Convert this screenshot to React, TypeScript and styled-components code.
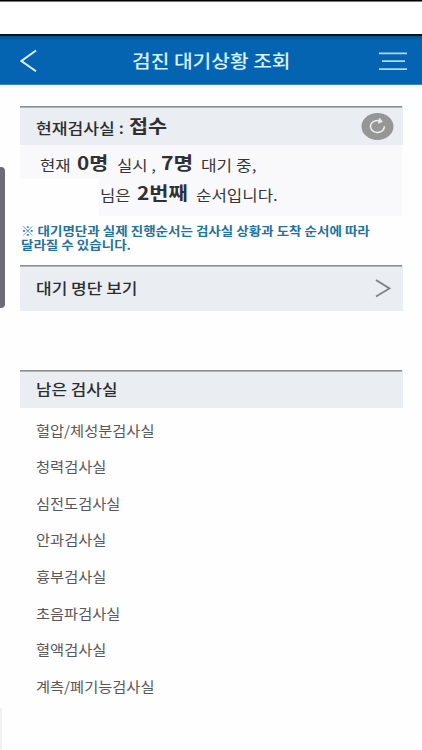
import React, { useLayoutEffect, useRef, useState } from "react";
import styled, { createGlobalStyle } from "styled-components";

const GlobalStyle = createGlobalStyle`
  * { box-sizing: border-box; }
  body { margin: 0; background: #fefefe; font-family: "Noto Sans CJK KR", "Noto Sans", sans-serif; }
  h1, h2, p, ul { margin: 0; padding: 0; font-weight: inherit; }
`;

const Screen = styled.div`
  position: relative;
  width: 422px;
  height: 750px;
  overflow: hidden;
  background: #fefefe;
`;

const StatusBar = styled.div`
  height: 36px;
  background: #fff;
  border-top: 1px solid #000;
  border-bottom: 2px solid #03121f;
  box-shadow: inset 0 1px 0 #777;
`;

const Header = styled.header`
  height: 49px;
  padding: 0 15px 0 20px;
  display: grid;
  grid-template-columns: 112px 1fr 28px;
  align-items: center;
  background: linear-gradient(#04528f 0, #0563ae 4px, #0464b2 10px, #0464b2 47px, #185f98 49px);
  border-bottom: 1px solid #3f86bd;
`;

const Content = styled.main`
  padding: 21px 19px 0 20px;
`;

const Bar = styled.div<{ $height: number; $top?: number }>`
  height: ${(p) => p.$height}px;
  margin-top: ${(p) => p.$top ?? 0}px;
  padding: 0 9px 0 16px;
  display: flex;
  align-items: center;
  background: linear-gradient(#8b8e90, #8b8e90) 0 0 / 382px 1.6px no-repeat, #eaedf1;
`;

const Push = styled.div<{ $right?: number }>`
  margin-left: auto;
  margin-right: ${(p) => p.$right ?? 0}px;
  display: flex;
`;

const Status = styled.div`
  height: 71px;
  width: 382px;
  background: #f9f9fc;
`;

const StatusRow = styled.p<{ $height: number; $left: number }>`
  height: ${(p) => p.$height}px;
  padding-left: ${(p) => p.$left}px;
  display: flex;
  align-items: center;
`;

const Redacted = styled.span`
  width: 79px;
  height: 37px;
  margin-right: 1px;
  background: #fefefe;
`;

const Notice = styled.div`
  height: 49px;
  padding: 8px 0 0 1px;
`;

const List = styled.ul`
  list-style: none;
  padding: 3.4px 0 0 16px;
`;

const Item = styled.li`
  height: 36.6px;
  display: flex;
  align-items: center;
`;

const SideHandle = styled.div`
  position: absolute;
  left: 0;
  top: 167px;
  width: 4.5px;
  height: 141px;
  border-radius: 0 4px 4px 0;
  background: #6e6b78;
`;

const CornerEdge = styled.div`
  position: absolute;
  left: 0;
  bottom: 0;
  width: 2px;
  height: 42px;
  background: #f1f1f1;
`;

type Tone = "title" | "label" | "strong" | "plain" | "notice" | "item";

const tones: Record<Tone, string> = {
  title: "font-size:18px;font-weight:500;color:#d9f1fd;line-height:24px;",
  label: "font-size:15px;font-weight:500;color:#2b2d30;line-height:20px;",
  strong: "font-size:18px;font-weight:700;color:#303034;line-height:24px;",
  plain: "font-size:14.5px;font-weight:400;color:#36363a;line-height:20px;",
  notice: "font-size:12px;font-weight:700;color:#24719b;line-height:14px;",
  item: "font-size:14px;font-weight:400;color:#58585a;line-height:20px;",
};

const TextBox = styled.span<{ $tone: Tone; $width: number; $gap: number; $shift: number }>`
  ${(p) => tones[p.$tone]}
  display: block;
  flex: none;
  width: ${(p) => p.$width}px;
  margin-left: ${(p) => p.$gap}px;
  margin-top: ${(p) => p.$shift}px;
  white-space: nowrap;
`;

const TextInner = styled.span`
  display: inline-block;
  transform-origin: 0 50%;
`;

interface FitProps {
  tone: Tone;
  width: number;
  gap?: number;
  shift?: number;
  children: React.ReactNode;
}

/* Widens its text so that it fills the given width. */
function Fit({ tone, width, gap = 0, shift = 0, children }: FitProps) {
  const ref = useRef<HTMLSpanElement>(null);
  const [scale, setScale] = useState(1);
  useLayoutEffect(() => {
    if (ref.current) setScale(width / ref.current.offsetWidth);
  }, [width]);
  return (
    <TextBox $tone={tone} $width={width} $gap={gap} $shift={shift}>
      <TextInner ref={ref} style={{ transform: `scaleX(${scale})` }}>
        {children}
      </TextInner>
    </TextBox>
  );
}

const rooms: [string, number][] = [
  ["혈압/체성분검사실", 119],
  ["청력검사실", 70],
  ["심전도검사실", 84],
  ["안과검사실", 70],
  ["흉부검사실", 70],
  ["초음파검사실", 84],
  ["혈액검사실", 70],
  ["계측/폐기능검사실", 119],
];

export default function App() {
  return (
    <Screen>
      <GlobalStyle />
      <StatusBar />
      <Header>
        <svg width="18" height="24" viewBox="0 0 18 24" fill="none" stroke="#d9f1fd" strokeWidth="2">
          <path d="M16 2.5 L1.5 13 L16 23.2" />
        </svg>
        <h1>
          <Fit tone="title" width={159}>검진 대기상황 조회</Fit>
        </h1>
        <svg width="28" height="22" viewBox="0 0 28 22" stroke="#a9dcf8" strokeWidth="1.8">
          <path d="M0 4.4H28M3 12.2H26M0 20.2H28" />
        </svg>
      </Header>
      <Content>
        <Bar $height={39}>
          <Fit tone="label" width={88} shift={4}>현재검사실 :</Fit>
          <Fit tone="strong" width={38} gap={5} shift={-1}>접수</Fit>
          <Push>
            <svg width="33" height="28" viewBox="0 0 33 28" fill="none">
              <ellipse cx="16.5" cy="14.5" rx="16" ry="13.5" fill="#969696" />
              <path d="M19.6 9.2 A7 6 0 1 0 23.4 14.2" stroke="#ececec" strokeWidth="1.6" />
              <path d="M18.4 6 L21.4 9.6 L17.2 11.4 Z" fill="#ececec" stroke="#ececec" strokeWidth="0.6" />
            </svg>
          </Push>
        </Bar>
        <Status>
          <StatusRow $height={34} $left={20}>
            <Fit tone="plain" width={31} shift={6}>현재</Fit>
            <Fit tone="strong" width={31} gap={6}>0명</Fit>
            <Fit tone="plain" width={39} gap={9} shift={6}>실시 ,</Fit>
            <Fit tone="strong" width={32} gap={5}>7명</Fit>
            <Fit tone="plain" width={55} gap={8} shift={6}>대기 중,</Fit>
          </StatusRow>
          <StatusRow $height={37} $left={0}>
            <Redacted />
            <Fit tone="plain" width={31} shift={-6}>님은</Fit>
            <Fit tone="strong" width={51} gap={6} shift={-12}>2번째</Fit>
            <Fit tone="plain" width={82} gap={8} shift={-6}>순서입니다.</Fit>
          </StatusRow>
        </Status>
        <Notice>
          <Fit tone="notice" width={349}>
            ※ 대기명단과 실제 진행순서는 검사실 상황과 도착 순서에 따라
            <br />
            달라질 수 있습니다.
          </Fit>
        </Notice>
        <Bar $height={46}>
          <Fit tone="label" width={102} shift={-1}>대기 명단 보기</Fit>
          <Push $right={3}>
            <svg width="16" height="20" viewBox="0 0 16 20" fill="none" stroke="#7e8082" strokeWidth="1.8">
              <path d="M1 2 L14.5 10.4 L1 18.6" />
            </svg>
          </Push>
        </Bar>
        <Bar $height={38} $top={59}>
          <h2>
            <Fit tone="label" width={81} shift={-1}>남은 검사실</Fit>
          </h2>
        </Bar>
        <List>
          {rooms.map(([name, width]) => (
            <Item key={name}>
              <Fit tone="item" width={width}>{name}</Fit>
            </Item>
          ))}
        </List>
      </Content>
      <SideHandle />
      <CornerEdge />
    </Screen>
  );
}
